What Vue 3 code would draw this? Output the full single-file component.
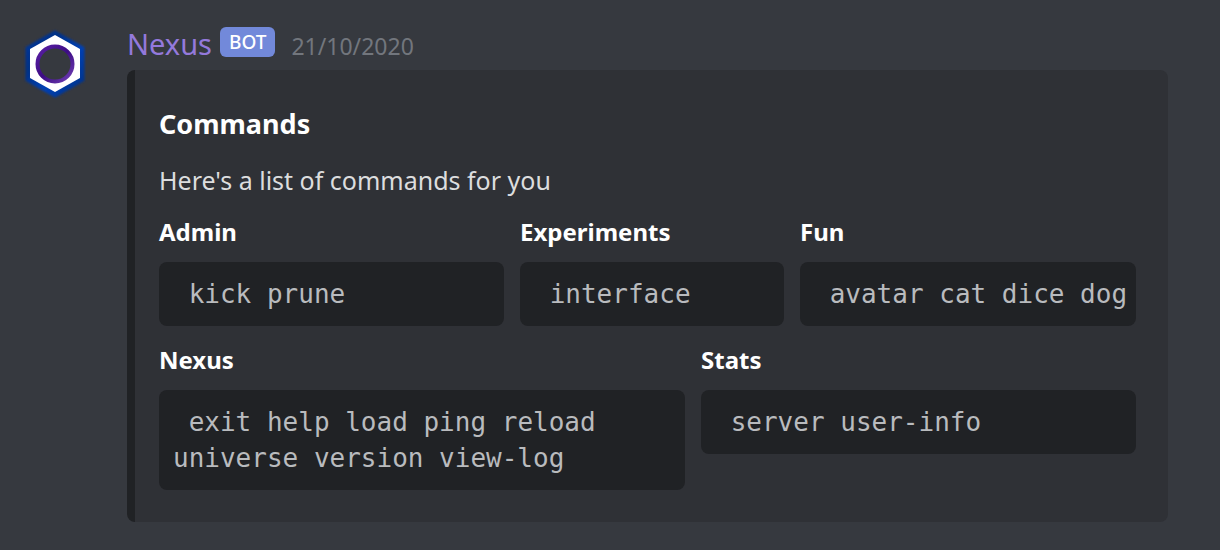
<script setup>
const rows = [
  [
    { name: 'Admin', commands: 'kick prune', share: 345 },
    { name: 'Experiments', commands: 'interface', share: 264 },
    { name: 'Fun', commands: 'avatar cat dice dog', share: 336 },
  ],
  [
    { name: 'Nexus', commands: 'exit help load ping reload universe version view-log', share: 526 },
    { name: 'Stats', commands: 'server user-info', share: 435 },
  ],
]
</script>

<template>
  <article class="message">
    <svg class="avatar" viewBox="0 0 64 72" role="img" aria-label="Nexus avatar">
      <defs>
        <linearGradient id="ring" x1="0" y1="0" x2="1" y2="1">
          <stop offset="0" stop-color="#5a1fa5" />
          <stop offset="0.5" stop-color="#3d0c84" />
          <stop offset="1" stop-color="#7040b4" />
        </linearGradient>
        <linearGradient id="edge" x1="0" y1="0" x2="1" y2="1">
          <stop offset="0" stop-color="#06389f" />
          <stop offset="0.3" stop-color="#053085" />
          <stop offset="0.6" stop-color="#0640b4" />
          <stop offset="1" stop-color="#05307f" />
        </linearGradient>
        <filter id="glow" x="-10%" y="-10%" width="120%" height="120%">
          <feGaussianBlur stdDeviation="0.8" />
        </filter>
      </defs>
      <path d="M33 4 61 20V52L33 68 5 52V20Z" fill="url(#edge)" stroke="url(#edge)" stroke-width="3" stroke-linejoin="round" filter="url(#glow)" />
      <path d="M33 7 58 21V50L33 64 8 50V21Z" fill="#fff" />
      <circle cx="33" cy="36" r="17.500" fill="#36393f" stroke="url(#ring)" stroke-width="4" />
    </svg>
    <div class="body">
      <header class="meta">
        <span class="author">Nexus</span>
        <span class="tag">BOT</span>
        <time datetime="2020-10-21">21/10/2020</time>
      </header>
      <section class="embed">
        <h2>Commands</h2>
        <p>Here's a list of commands for you</p>
        <div v-for="(row, i) in rows" :key="i" class="row">
          <div v-for="group in row" :key="group.name" class="group" :style="{ flexGrow: group.share }">
            <h3>{{ group.name }}</h3>
            <pre><code>{{ ' ' + group.commands }}</code></pre>
          </div>
        </div>
      </section>
    </div>
  </article>
</template>

<style>
body {
  margin: 0;
  background: #36393f;
}
</style>

<style scoped>
.message {
  display: flex;
  gap: 41px;
  min-height: 100vh;
  box-sizing: border-box;
  padding: 24px 52px 24px 22px;
  font-family: "Noto Sans", "Open Sans", sans-serif;
  color: #dcddde;
}
.avatar {
  flex: none;
  width: 64px;
  height: 72px;
  margin-top: 4px;
}
.body {
  flex: 1;
  min-width: 0;
}
.meta {
  display: flex;
  align-items: baseline;
  height: 46px;
  line-height: 40px;
}
.author {
  font-size: 29px;
  color: #9479dc;
}
.tag {
  align-self: flex-start;
  margin: 3px 16px 0 8px;
  padding: 0 9px;
  border-radius: 6px;
  background: #7289da;
  color: #fff;
  font-size: 19px;
  font-weight: 500;
  line-height: 30px;
}
time {
  font-size: 23px;
  color: #72767d;
}
.embed {
  box-sizing: border-box;
  padding: 32px 32px 32px 24px;
  border-left: 8px solid #202225;
  border-radius: 8px;
  background: #2f3136;
}
h2, h3, p, pre {
  margin: 0;
}
h2 {
  font-size: 27px;
  line-height: 44px;
  color: #fff;
}
p {
  margin-top: 16px;
  font-size: 25px;
  line-height: 36px;
}
.row {
  display: flex;
  align-items: flex-start;
  gap: 16px;
  margin-top: 16px;
}
.group {
  flex: 1 1 0;
  min-width: 0;
}
h3 {
  font-size: 24px;
  line-height: 36px;
  color: #fff;
}
pre {
  margin-top: 12px;
  padding: 14px 8px 14px 14px;
  border-radius: 8px;
  background: #202225;
  color: #b9bbbe;
  font-family: "DejaVu Sans Mono", "Liberation Mono", monospace;
  font-size: 26px;
  line-height: 36px;
  white-space: pre-wrap;
}
code {
  font: inherit;
}
</style>
